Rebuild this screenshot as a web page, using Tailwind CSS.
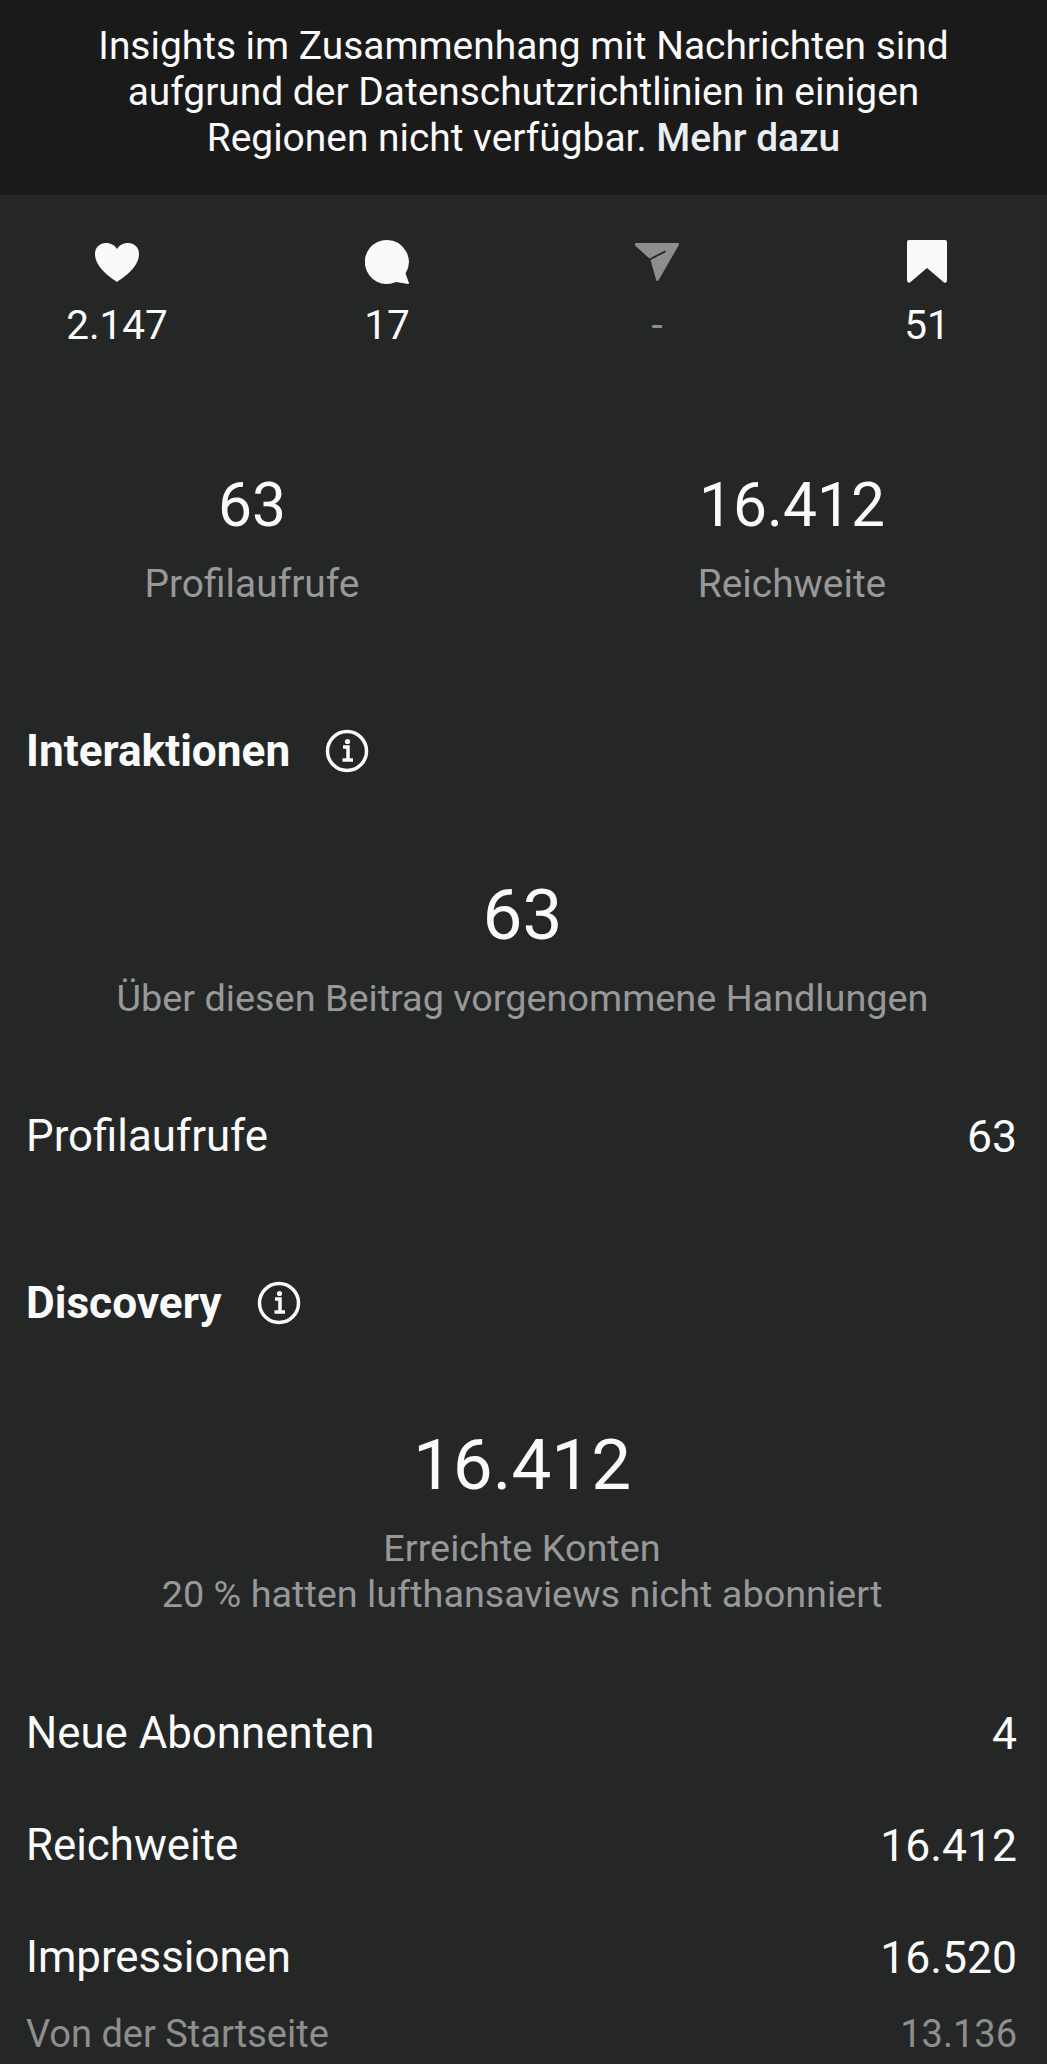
<!DOCTYPE html>
<html lang="de">
<head>
<meta charset="utf-8">
<script src="https://cdn.jsdelivr.net/npm/@tailwindcss/browser@4"></script>
</head>
<body class="m-0">
<main class="w-[1047px] h-[2064px] overflow-hidden bg-[#252727] text-[#fafafa] font-['Roboto',sans-serif]">
  <section class="h-[195px] bg-[#1a1a1a] pt-[23px] text-center text-[38.900px] leading-[46px]">
    <p class="w-[899px] mx-auto">Insights im Zusammenhang mit Nachrichten sind aufgrund der Datenschutzrichtlinien in einigen Regionen nicht verfügbar. <span class="font-medium text-[#e8eef2]">Mehr dazu</span></p>
  </section>
  <section class="flex pl-[72px] gap-[180px] pt-[45px] text-center text-[40.500px] leading-[46px]">
    <div class="w-[90px] shrink-0 flex flex-col items-center">
      <svg class="w-[44px] h-[44px]" viewBox="0 0 44 44"><path fill="#fafafa" d="M22 42 C20 40 0 29 0 14 C0 7 5 3 11 3 C16 3 20 5.500 22 9 C24 5.500 28 3 33 3 C39 3 44 7 44 14 C44 29 24 40 22 42Z"/></svg>
      <span class="mt-[18px]">2.147</span>
    </div>
    <div class="w-[90px] shrink-0 flex flex-col items-center">
      <svg class="w-[44px] h-[44px]" viewBox="0 0 44 44"><path fill="#fafafa" d="M22 0 A22 22 0 1 0 31 42 L43 44 Q44 44 44 43 L40.500 33.500 A22 22 0 0 0 22 0Z"/></svg>
      <span class="mt-[18px]">17</span>
    </div>
    <div class="w-[90px] shrink-0 flex flex-col items-center text-[#8e8e8e]">
      <svg class="w-[44px] h-[44px]" viewBox="0 0 44 44"><path fill="#8e8e8e" d="M1.500 3 H42.500 Q44.500 3 43.800 5 L24 39.500 Q22 42.500 21 39.500 L15.500 20 L31 12 L30 10.500 L14.500 18.500 L0.500 6 Q-1 3 1.500 3Z"/></svg>
      <span class="mt-[18px]">-</span>
    </div>
    <div class="w-[90px] shrink-0 flex flex-col items-center">
      <svg class="w-[44px] h-[44px]" viewBox="0 0 44 44"><path fill="#fafafa" d="M4 0 H40 Q42 0 42 2 V40 Q42 43.500 39 42.500 L22 28 L5 42.500 Q2 43.500 2 40 V2 Q2 0 4 0Z"/></svg>
      <span class="mt-[18px]">51</span>
    </div>
  </section>
  <section class="flex pl-[72px] gap-[180px] pt-[123px] text-center">
    <div class="w-[360px] shrink-0"><div class="text-[60.500px] leading-[70px]">63</div><div class="text-[38.900px] leading-[46px] mt-[20px] text-[#989898]">Profilaufrufe</div></div>
    <div class="w-[360px] shrink-0"><div class="text-[60.500px] leading-[70px]">16.412</div><div class="text-[38.900px] leading-[46px] mt-[20px] text-[#989898]">Reichweite</div></div>
  </section>
  <section class="pl-[26px] pr-[30px]">
    <h2 class="flex items-center h-[46px] mt-[121px] text-[44.200px] font-bold">Interaktionen
      <svg class="ml-[35px] w-[44px] h-[44px]" viewBox="0 0 44 44" fill="none" stroke="#fafafa" stroke-width="3.500"><circle cx="22" cy="22" r="19.500"/><path d="M18 18 H23 V31 M17.500 31 H28"/><circle cx="22.500" cy="12.500" r="2.600" fill="#fafafa" stroke="none"/></svg>
    </h2>
    <div class="text-center -mr-[2px]"><div class="mt-[101px] text-[71px] leading-[80px]">63</div><div class="mt-[20px] text-[37.800px] leading-[46px] text-[#989898]">Über diesen Beitrag vorgenommene Handlungen</div></div>
    <div class="mt-[91px] flex justify-between items-center h-[50px] text-[43.800px]"><span>Profilaufrufe</span><span class="text-[44.500px]">63</span></div>
    <h2 class="flex items-center h-[46px] mt-[118px] text-[44.200px] font-bold">Discovery
      <svg class="ml-[35px] w-[44px] h-[44px]" viewBox="0 0 44 44" fill="none" stroke="#fafafa" stroke-width="3.500"><circle cx="22" cy="22" r="19.500"/><path d="M18 18 H23 V31 M17.500 31 H28"/><circle cx="22.500" cy="12.500" r="2.600" fill="#fafafa" stroke="none"/></svg>
    </h2>
    <div class="text-center -mr-[1px]"><div class="mt-[99px] text-[71px] leading-[80px]">16.412</div><div class="mt-[20px] text-[37.800px] leading-[46px] text-[#989898]">Erreichte Konten<br>20 % hatten lufthansaviews nicht abonniert</div></div>
    <div class="mt-[92px] flex justify-between items-center h-[50px] text-[43.800px]"><span>Neue Abonnenten</span><span class="text-[44.500px]">4</span></div>
    <div class="mt-[62px] flex justify-between items-center h-[50px] text-[43.800px]"><span>Reichweite</span><span class="text-[44.500px]">16.412</span></div>
    <div class="mt-[62px] flex justify-between items-center h-[50px] text-[43.800px]"><span>Impressionen</span><span class="text-[44.500px]">16.520</span></div>
    <div class="mt-[28px] flex justify-between items-center h-[46px] text-[38px] text-[#8e8e8e]"><span>Von der Startseite</span><span>13.136</span></div>
  </section>
</main>
</body>
</html>
